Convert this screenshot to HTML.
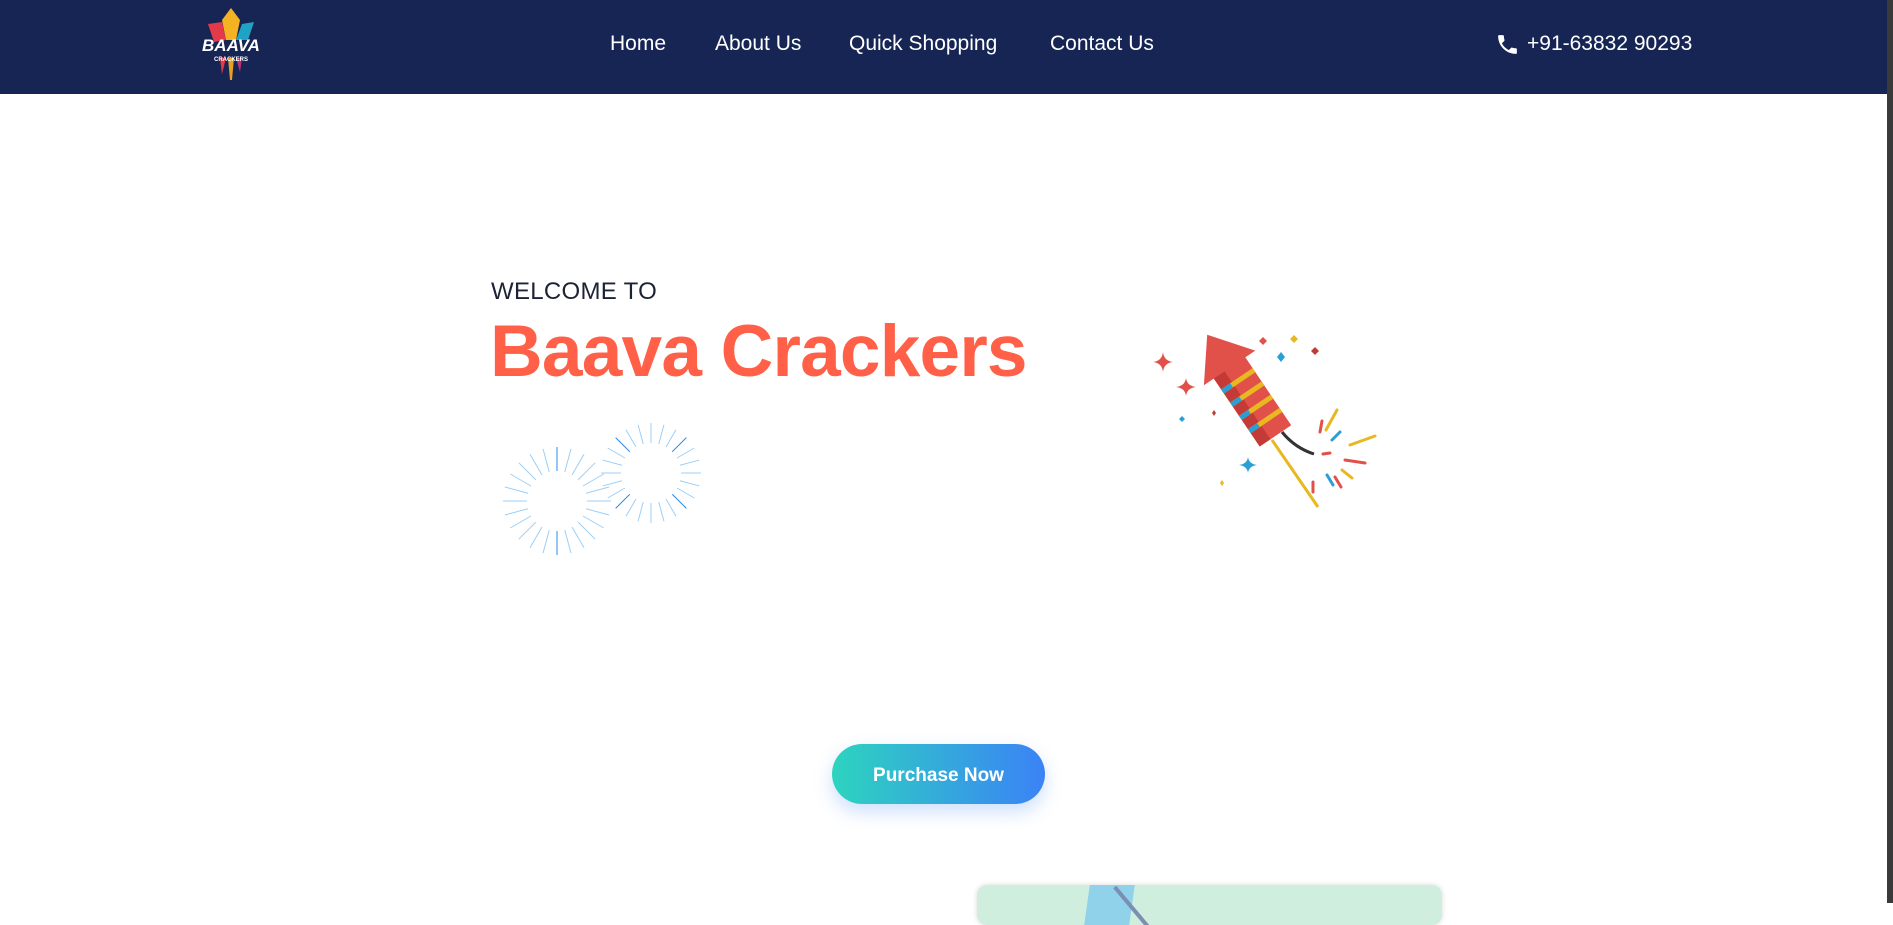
<!DOCTYPE html>
<html><head><meta charset="utf-8"><style>
*{margin:0;padding:0;box-sizing:border-box}
html,body{width:1893px;height:903px;overflow:hidden;background:#fff;font-family:"Liberation Sans",sans-serif}
.nav{position:absolute;left:0;top:0;width:1887px;height:94px;background:#172554}
.nav a{position:absolute;top:32px;color:#fff;font-size:21px;text-decoration:none}
.edge{position:absolute;right:0;top:0;width:6px;height:903px;background:#3a3a3a}
.welcome{position:absolute;left:491px;top:278px;font-size:24px;color:#1e2235;letter-spacing:0.3px}
.title{position:absolute;left:490px;top:310px;font-size:73px;font-weight:bold;color:#ff6047;letter-spacing:-0.8px}
.btn{position:absolute;left:832px;top:744px;width:213px;height:60px;border-radius:30px;background:linear-gradient(90deg,#2dd4bf,#3b82f6);color:#fff;font-weight:bold;font-size:19px;text-align:center;line-height:64px;box-shadow:0 8px 18px rgba(59,130,246,.25)}
.map{position:absolute;left:977px;top:885px;width:465px;height:40px;border-radius:10px;background:#cfeedd;overflow:hidden;box-shadow:0 0 6px rgba(0,0,0,.15)}
</style></head><body>
<div class="nav">
<svg style="position:absolute;left:196px;top:6px" width="70" height="76" viewBox="0 0 70 76">
<polygon points="35,2 44,14 40,34 30,34 26,14" fill="#f5b323"/>
<polygon points="12,18 26,16 30,34 18,36" fill="#e23a4a"/>
<polygon points="58,16 46,18 40,34 52,34" fill="#1fa3c4"/>
<polygon points="32,52 38,52 36,74 34,74" fill="#e8a020"/>
<polygon points="24,52 30,52 26,68" fill="#e23a4a"/>
<polygon points="40,52 46,52 44,66" fill="#c0307a"/>
<text x="35" y="45" font-size="17" font-weight="bold" fill="#fff" text-anchor="middle" font-family="Liberation Sans" font-style="italic">BAAVA</text>
<text x="35" y="55" font-size="6" font-weight="bold" fill="#fff" text-anchor="middle" font-family="Liberation Sans">CRACKERS</text>
</svg>
<a style="left:610px">Home</a>
<a style="left:715px">About Us</a>
<a style="left:849px">Quick Shopping</a>
<a style="left:1050px">Contact Us</a>
<svg style="position:absolute;left:1495px;top:32px" width="25" height="25" viewBox="0 0 24 24"><path fill="#fff" d="M6.6 10.8c1.4 2.8 3.8 5.1 6.6 6.6l2.2-2.2c.3-.3.7-.4 1-.2 1.1.4 2.3.6 3.6.6.6 0 1 .4 1 1V20c0 .6-.4 1-1 1C10.6 21 3 13.4 3 4c0-.6.4-1 1-1h3.5c.6 0 1 .4 1 1 0 1.3.2 2.5.6 3.6.1.3 0 .7-.2 1L6.6 10.8z"/></svg>
<a style="left:1527px">+91-63832 90293</a>
</div>
<div class="edge"></div>
<div class="welcome">WELCOME TO</div>
<div class="title">Baava Crackers</div>
<svg style="position:absolute;left:490px;top:410px" width="230" height="150">
<g transform="translate(67,91)" stroke="#9ccff7" stroke-width="1">
<line x1="30" y1="0" x2="54" y2="0"/><line x1="30" y1="0" x2="54" y2="0" transform="rotate(15)"/><line x1="30" y1="0" x2="54" y2="0" transform="rotate(30)"/><line x1="30" y1="0" x2="54" y2="0" transform="rotate(45)"/><line x1="30" y1="0" x2="54" y2="0" transform="rotate(60)"/><line x1="30" y1="0" x2="54" y2="0" transform="rotate(75)"/><line x1="30" y1="0" x2="54" y2="0" transform="rotate(90)" stroke="#2b8be8"/><line x1="30" y1="0" x2="54" y2="0" transform="rotate(105)"/><line x1="30" y1="0" x2="54" y2="0" transform="rotate(120)"/><line x1="30" y1="0" x2="54" y2="0" transform="rotate(135)"/><line x1="30" y1="0" x2="54" y2="0" transform="rotate(150)"/><line x1="30" y1="0" x2="54" y2="0" transform="rotate(165)"/><line x1="30" y1="0" x2="54" y2="0" transform="rotate(180)"/><line x1="30" y1="0" x2="54" y2="0" transform="rotate(195)"/><line x1="30" y1="0" x2="54" y2="0" transform="rotate(210)"/><line x1="30" y1="0" x2="54" y2="0" transform="rotate(225)"/><line x1="30" y1="0" x2="54" y2="0" transform="rotate(240)"/><line x1="30" y1="0" x2="54" y2="0" transform="rotate(255)"/><line x1="30" y1="0" x2="54" y2="0" transform="rotate(270)" stroke="#2b8be8"/><line x1="30" y1="0" x2="54" y2="0" transform="rotate(285)"/><line x1="30" y1="0" x2="54" y2="0" transform="rotate(300)"/><line x1="30" y1="0" x2="54" y2="0" transform="rotate(315)"/><line x1="30" y1="0" x2="54" y2="0" transform="rotate(330)"/><line x1="30" y1="0" x2="54" y2="0" transform="rotate(345)"/>
</g>
<g transform="translate(161,63)" stroke="#9ccff7" stroke-width="1">
<line x1="30" y1="0" x2="50" y2="0"/><line x1="30" y1="0" x2="50" y2="0" transform="rotate(15)"/><line x1="30" y1="0" x2="50" y2="0" transform="rotate(30)"/><line x1="30" y1="0" x2="50" y2="0" transform="rotate(45)" stroke="#2b8be8"/><line x1="30" y1="0" x2="50" y2="0" transform="rotate(60)"/><line x1="30" y1="0" x2="50" y2="0" transform="rotate(75)"/><line x1="30" y1="0" x2="50" y2="0" transform="rotate(90)"/><line x1="30" y1="0" x2="50" y2="0" transform="rotate(105)"/><line x1="30" y1="0" x2="50" y2="0" transform="rotate(120)"/><line x1="30" y1="0" x2="50" y2="0" transform="rotate(135)" stroke="#2b8be8"/><line x1="30" y1="0" x2="50" y2="0" transform="rotate(150)"/><line x1="30" y1="0" x2="50" y2="0" transform="rotate(165)"/><line x1="30" y1="0" x2="50" y2="0" transform="rotate(180)"/><line x1="30" y1="0" x2="50" y2="0" transform="rotate(195)"/><line x1="30" y1="0" x2="50" y2="0" transform="rotate(210)"/><line x1="30" y1="0" x2="50" y2="0" transform="rotate(225)" stroke="#2b8be8"/><line x1="30" y1="0" x2="50" y2="0" transform="rotate(240)"/><line x1="30" y1="0" x2="50" y2="0" transform="rotate(255)"/><line x1="30" y1="0" x2="50" y2="0" transform="rotate(270)"/><line x1="30" y1="0" x2="50" y2="0" transform="rotate(285)"/><line x1="30" y1="0" x2="50" y2="0" transform="rotate(300)"/><line x1="30" y1="0" x2="50" y2="0" transform="rotate(315)" stroke="#2b8be8"/><line x1="30" y1="0" x2="50" y2="0" transform="rotate(330)"/><line x1="30" y1="0" x2="50" y2="0" transform="rotate(345)"/>
</g>
</svg>
<svg style="position:absolute;left:1130px;top:320px" width="260" height="200" viewBox="0 0 260 200">
<line x1="142" y1="120" x2="188" y2="187" stroke="#e8b820" stroke-width="3"/>
<path d="M152 112 Q165 128 184 134" stroke="#333" stroke-width="3" fill="none"/>
<g transform="rotate(-34 120 80)">
<rect x="102" y="40" width="38" height="84" fill="#e2504a"/>
<rect x="102" y="40" width="13" height="84" fill="#c43a36"/>
<rect x="102" y="55" width="38" height="5" fill="#e8b820"/><rect x="102" y="55" width="11" height="5" fill="#2a9fd6"/>
<rect x="102" y="71" width="38" height="5" fill="#e8b820"/><rect x="102" y="71" width="11" height="5" fill="#2a9fd6"/>
<rect x="102" y="87" width="38" height="5" fill="#e8b820"/><rect x="102" y="87" width="11" height="5" fill="#2a9fd6"/>
<rect x="102" y="103" width="38" height="5" fill="#e8b820"/><rect x="102" y="103" width="11" height="5" fill="#2a9fd6"/>
<polygon points="121,2 90,42 152,42" fill="#e2504a"/>
</g>
<path d="M33 32 Q34 41 43 42 Q34 43 33 52 Q32 43 23 42 Q32 41 33 32Z M56 58 Q57 66 66 67 Q57 68 56 76 Q55 68 46 67 Q55 66 56 58Z" fill="#e2504a"/>
<path d="M133 17l4 4-4 4-4-4z" fill="#e2504a"/><path d="M185 27l4 4-4 4-4-4z" fill="#c43a36"/>
<path d="M164 15l4 4-4 4-4-4z" fill="#e8b820"/><path d="M151 32l4 5-4 5-4-5z" fill="#2a9fd6"/>
<path d="M118 137 Q119 144 127 145 Q119 146 118 153 Q117 146 109 145 Q117 144 118 137Z" fill="#2a9fd6"/><path d="M52 96l3 3-3 3-3-3z" fill="#2a9fd6"/>
<path d="M84 90l2 3-2 3-2-3z" fill="#c43a36"/><path d="M92 160l2 3-2 3-2-3z" fill="#e8b820"/>
<g stroke-width="3" stroke-linecap="round">
<line x1="196" y1="110" x2="207" y2="90" stroke="#e8b820"/><line x1="220" y1="125" x2="245" y2="116" stroke="#e8b820"/>
<line x1="215" y1="140" x2="235" y2="143" stroke="#e2504a"/><line x1="212" y1="150" x2="222" y2="158" stroke="#e8b820"/>
<line x1="197" y1="155" x2="203" y2="165" stroke="#2a9fd6"/><line x1="183" y1="162" x2="183" y2="172" stroke="#e2504a"/>
<line x1="202" y1="120" x2="210" y2="112" stroke="#2a9fd6"/><line x1="190" y1="112" x2="192" y2="101" stroke="#e2504a"/>
<line x1="205" y1="157" x2="211" y2="167" stroke="#e2504a"/><line x1="193" y1="134" x2="200" y2="133" stroke="#e2504a"/>
</g>
</svg>
<div class="btn">Purchase Now</div>
<div class="map">
<div style="position:absolute;left:110px;top:0;width:45px;height:40px;background:#8fd2ea;transform:skewX(-8deg)"></div>
<div style="position:absolute;top:-5px;width:4px;height:60px;background:#7b8fb3;transform:rotate(-40deg);left:155px"></div>
</div>
</body></html>
